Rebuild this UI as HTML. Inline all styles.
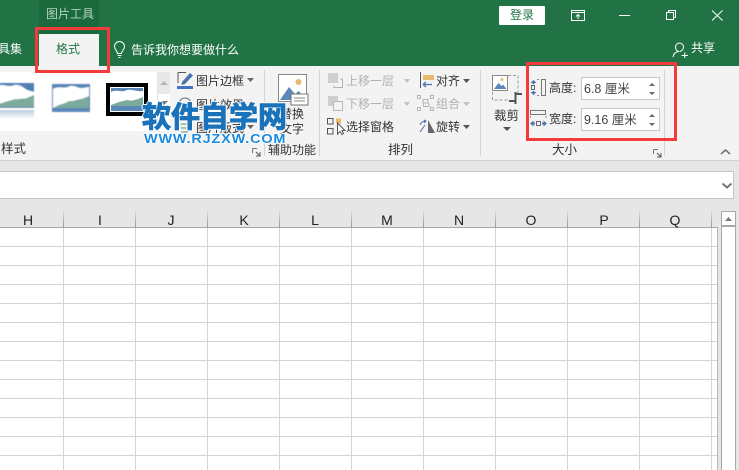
<!DOCTYPE html>
<html lang="zh"><head><meta charset="utf-8"><style>
html,body{margin:0;padding:0}
body{width:739px;height:470px;overflow:hidden;position:relative;background:#e6e6e6;font-family:"Liberation Sans","Noto Sans CJK SC",sans-serif;font-size:12px;color:#333}
.a{position:absolute}
.t{position:absolute;white-space:nowrap;line-height:16px}
.g{color:#b1b1b1}
.h{position:absolute;top:211px;font:14px/18px "Liberation Sans",sans-serif;color:#222;width:20px;text-align:center}
.sep{position:absolute;background:#d4d4d4;width:1px}
svg{position:absolute;overflow:visible}
</style></head><body>
<!-- title -->
<div class="a" style="left:0;top:0;width:739px;height:66px;background:#217346"></div>
<div class="a" style="left:39px;top:0;width:60px;height:34px;background:#1b6a3d"></div>
<div class="t" style="left:46px;top:6px;color:#b5d3c1;font-size:12px">图片工具</div>
<div class="a" style="left:39px;top:34px;width:60px;height:32px;background:#f3f3f3"></div>
<div class="t" style="left:56px;top:41px;color:#217346">格式</div>
<div class="t" style="left:0;top:41px;color:#fff;width:22px;overflow:hidden;direction:rtl">工具集</div>
<svg style="left:113px;top:41px" width="14" height="18" fill="none" stroke="#fff" stroke-width="1"><path d="M4.5 12.5C4.5 9.5 1.5 9 1.5 5.5A5 5 0 0 1 11.5 5.5C11.5 9 8.500 9.500 8.500 12.500ZM4.500 14.500H8.500M5.500 16.500H7.500"/></svg>
<div class="t" style="left:131px;top:42px;color:#fff">告诉我你想要做什么</div>
<div class="a" style="left:499px;top:6px;width:46px;height:19px;background:#fff;border-radius:1px"></div>
<div class="t" style="left:510px;top:7px;color:#217346">登录</div>
<svg style="left:570px;top:9px" width="16" height="14" fill="none" stroke="#fff"><path d="M1.500 1.500H14.500V11.500H1.500ZM1.500 3.500H14.500M8 10V5.500M6 7.500L8 5.500L10 7.500"/></svg>
<svg style="left:618px;top:15px" width="12" height="2"><path d="M1 .500H12" stroke="#fff" fill="none"/></svg>
<svg style="left:665px;top:9px" width="12" height="12" fill="none" stroke="#fff"><path d="M1.500 3.500H8.500V10.500H1.500ZM3.500 3.500V1.500H10.500V8.500H8.500"/></svg>
<svg style="left:711px;top:10px" width="12" height="12" fill="none" stroke="#fff"><path d="M1 .500L11.500 10.500M11.500 .500L1 10.500"/></svg>
<svg style="left:671px;top:41px" width="18" height="17" fill="none" stroke="#fff"><path d="M2 16C2.500 12.500 4.500 11 7.500 10.500C5 9.500 4.500 8 4.500 6A4 4 0 0 1 12.500 6C12.500 8 11.500 9.500 9 10.500M10.500 14.500H17M13.750 11.500V17"/></svg>
<div class="t" style="left:691px;top:40px;color:#fff">共享</div>
<!-- ribbon -->
<div class="a" style="left:0;top:66px;width:739px;height:94px;background:#f3f3f3"></div>
<div class="a" style="left:0;top:160px;width:739px;height:1px;background:#d2d2d2"></div>
<div class="a" style="left:0;top:72px;width:157px;height:59px;background:#fff"></div>
<div class="a" style="left:157px;top:72px;width:13px;height:59px;background:#fff;border-left:1px solid #e3e3e3;box-sizing:border-box"></div>
<div class="a" style="left:158px;top:72px;width:12px;height:22px;background:#e8e8e8"></div>
<svg style="left:158px;top:79px" width="12" height="8"><path d="M2 6H10L6 2Z" fill="#b8b8b8"/></svg>
<svg style="left:158px;top:99px" width="12" height="8"><path d="M2 2H10L6 6Z" fill="#777"/></svg>
<!-- thumbnails -->
<svg style="left:0;top:83px" width="34" height="38"><defs><filter id="b"><feGaussianBlur stdDeviation=".5"/></filter><linearGradient id="f" x1="0" y1="0" x2="0" y2="1"><stop offset="0" stop-color="#b9cbe0"/><stop offset="1" stop-color="#fff"/></linearGradient></defs><g filter="url(#b)"><rect x="-4" y="0" width="38" height="25" fill="#5380b5"/><path d="M-4 3C4 0 8 5 14 2C20 1 24 5 27 7L34 9V15L20 16L8 19L-4 22Z" fill="#fff"/><path d="M-4 22L8 18L16 16L22 17L34 12V24H-4Z" fill="#7dab9b"/><rect x="-4" y="25" width="38" height="1.500" fill="#fff"/><rect x="-4" y="27" width="38" height="9" fill="url(#f)"/></g></svg>
<svg style="left:51px;top:83px" width="40" height="30"><g filter="url(#b)"><rect x="1" y="1" width="38" height="28" fill="#5b87b9"/><path d="M2 6C8 2 12 7 19 3C24 2 28 6 32 5L38 4V14L22 18L8 22L2 25Z" fill="#fff"/><path d="M2 25L10 22L18 18L26 18L38 13V25Z" fill="#7dab9b"/></g></svg>
<div class="a" style="left:106px;top:83px;width:42px;height:33px;background:#000"></div>
<div class="a" style="left:110px;top:87px;width:34px;height:25px;background:#fff"></div>
<svg style="left:111px;top:88px" width="32" height="23"><rect width="32" height="23" fill="#5b87b9"/><path d="M0 4C6 1 10 5 16 2C22 1 26 4 32 3V10L20 13L8 15L0 17Z" fill="#fff"/><path d="M0 17L8 14L16 12L22 13L32 9V18H0Z" fill="#7dab9b"/></svg>
<div class="t" style="left:0;top:141px;color:#333;width:26px;overflow:hidden;direction:rtl;font-size:12.500px">片样式</div>
<svg style="left:252px;top:148px" width="9" height="9" fill="none" stroke="#777"><path d="M.500 .500H5M.500 .500V5"/><path d="M4 4L8 8M8 4V8H4" stroke="#555"/></svg>
<!-- border etc -->
<svg style="left:177px;top:71px" width="17" height="18" fill="none"><path d="M1 1.500H9M1 1.500V12" stroke="#555"/><path d="M5 11L13 2L16 4.500L8 13L4.500 14Z" fill="#4b74ad"/><rect y="15" width="16" height="3" fill="#4472c4"/></svg>
<div class="t" style="left:196px;top:73px">图片边框</div>
<svg style="left:247px;top:78px" width="7" height="4"><path d="M0 0H7L3.500 4Z" fill="#666"/></svg>
<svg style="left:177px;top:97px" width="16" height="14" fill="none" stroke="#666"><circle cx="8" cy="7" r="6"/></svg>
<div class="t" style="left:196px;top:97px">图片效果</div>
<svg style="left:180px;top:122px" width="12" height="12" fill="none" stroke="#5b9a6f"><path d="M1 2H8M1 6H8M1 10H8"/></svg>
<div class="t" style="left:196px;top:120px">图片版式</div>
<svg style="left:247px;top:125px" width="7" height="4"><path d="M0 0H7L3.500 4Z" fill="#666"/></svg>
<div class="sep" style="left:264px;top:70px;height:86px"></div>
<!-- alt text -->
<svg style="left:278px;top:74px" width="31" height="33"><rect x=".500" y=".500" width="28" height="27" fill="#fff" stroke="#888"/><circle cx="20.500" cy="8" r="3" fill="#e8b96a"/><path d="M2 26L11 13L17 20L21 17L27 26Z" fill="#5b87b9"/><rect x="13" y="20" width="17" height="11" fill="#fff" stroke="#777"/><path d="M16 24H27M16 27H27" stroke="#888"/></svg>
<div class="t" style="left:280px;top:106px">替换</div>
<div class="t" style="left:280px;top:121px">文字</div>
<div class="t" style="left:268px;top:142px">辅助功能</div>
<div class="sep" style="left:319px;top:70px;height:86px"></div>
<!-- arrange -->
<svg style="left:328px;top:73px" width="16" height="16" fill="none"><rect width="10" height="10" fill="#cfcfcf"/><path d="M6 12.500V14.500H14.500V6H12" stroke="#b5b5b5"/></svg>
<div class="t g" style="left:346px;top:73px">上移一层</div>
<svg style="left:404px;top:79px" width="6" height="4"><path d="M0 0H6L3 4Z" fill="#c0c0c0"/></svg>
<svg style="left:328px;top:96px" width="16" height="16" fill="none"><rect width="10" height="10" fill="#cfcfcf"/><rect x="5.500" y="5.500" width="9" height="9" fill="#f3f3f3" stroke="#b5b5b5"/></svg>
<div class="t g" style="left:346px;top:96px">下移一层</div>
<svg style="left:404px;top:102px" width="6" height="4"><path d="M0 0H6L3 4Z" fill="#c0c0c0"/></svg>
<svg style="left:327px;top:118px" width="19" height="17" fill="none" stroke="#555"><path d="M.500 .500H6V6H.500ZM.500 10.500H6V16H.500Z"/><rect x="9" y=".500" width="5" height="5" fill="#e8b96a" stroke="none"/><path d="M10.500 5V16L13 13.500L15 16.500L16.500 15.500L15 12.500H18Z" fill="#fff"/></svg>
<div class="t" style="left:346px;top:119px">选择窗格</div>
<svg style="left:420px;top:72px" width="16" height="17" fill="none"><path d="M.500 0V16" stroke="#555"/><rect x="3" y="3" width="11" height="5" fill="#e8b96a"/><path d="M3 12.500H12M3 12.500L6 10M3 12.500L6 15" stroke="#4b74ad" stroke-width="1.300"/></svg>
<div class="t" style="left:436px;top:73px">对齐</div>
<svg style="left:463px;top:79px" width="7" height="4"><path d="M0 0H7L3.500 4Z" fill="#555"/></svg>
<svg style="left:417px;top:95px" width="17" height="16" fill="none" stroke="#b5b5b5"><path d="M.500 .500H3.500V3.500H.500ZM13.500 .500H16.500V3.500H13.500ZM.500 12.500H3.500V15.500H.500ZM13.500 12.500H16.500V15.500H13.500ZM6 4.500H11V8H6ZM6.500 8V11.500H12V8"/></svg>
<div class="t g" style="left:436px;top:96px">组合</div>
<svg style="left:463px;top:102px" width="7" height="4"><path d="M0 0H7L3.500 4Z" fill="#c0c0c0"/></svg>
<svg style="left:419px;top:119px" width="17" height="15" fill="none"><path d="M9 14V1L16 14Z" fill="#666"/><path d="M1 13L6 6M1 6C2 3 4 2 7 2M5 1L7 2L5 4" stroke="#4b74ad"/></svg>
<div class="t" style="left:436px;top:119px">旋转</div>
<svg style="left:463px;top:125px" width="7" height="4"><path d="M0 0H7L3.500 4Z" fill="#555"/></svg>
<div class="t" style="left:388px;top:142px;font-size:12.500px">排列</div>
<div class="sep" style="left:480px;top:70px;height:86px"></div>
<!-- crop -->
<svg style="left:491px;top:74px" width="32" height="32" fill="none"><rect x="1.500" y="1.500" width="15" height="15" fill="#fff" stroke="#888"/><path d="M3 15L7.500 9L10.500 12L12 10.500L15.500 15Z" fill="#5b87b9"/><circle cx="11" cy="5.500" r="1.500" fill="#e8b96a"/><path d="M17 1.500H27V19M1.500 18V26H18" stroke="#999" stroke-dasharray="3 2"/><path d="M18 27H24.500V20H31M24.500 20V18M24.500 27V30" stroke="#555" stroke-width="2"/></svg>
<div class="t" style="left:494px;top:108px;font-size:12.500px">裁剪</div>
<svg style="left:503px;top:127px" width="8" height="4"><path d="M0 0H8L4 4Z" fill="#555"/></svg>
<!-- size -->
<svg style="left:530px;top:79px" width="17" height="17" fill="none"><path d="M3.500 1L6.500 4H.500ZM3.500 16L6.500 13H.500Z" fill="#4b74ad"/><path d="M3.500 3V5M3.500 12V14" stroke="#4b74ad" stroke-width="2"/><rect x="1.500" y="6.500" width="3" height="4" stroke="#666"/><path d="M7 .500H9M7 16.500H9" stroke="#888"/><rect x="11.500" y=".500" width="4" height="16" stroke="#777"/></svg>
<div class="t" style="left:549px;top:80px">高度:</div>
<div class="a" style="left:581px;top:77px;width:79px;height:23px;background:#fff;border:1px solid #c6c6c6;box-sizing:border-box"></div>
<div class="t" style="left:584px;top:81px;color:#444;font-size:12.500px">6.8 厘米</div>
<svg style="left:648px;top:82px" width="8" height="15"><path d="M1 4H7L4 1ZM1 10H7L4 13Z" fill="#666"/></svg>
<svg style="left:530px;top:110px" width="17" height="17" fill="none"><rect x=".500" y=".500" width="15" height="4" stroke="#777"/><path d="M.500 6V8M16 6V8" stroke="#999"/><path d="M0 13.500L3.500 10.500V16.500ZM17 13.500L13.500 10.500V16.500Z" fill="#4b74ad"/><path d="M3 13.500H5M12 13.500H14" stroke="#4b74ad" stroke-width="2"/><rect x="6.500" y="11.500" width="4" height="4" stroke="#666"/></svg>
<div class="t" style="left:549px;top:111px">宽度:</div>
<div class="a" style="left:581px;top:108px;width:79px;height:23px;background:#fff;border:1px solid #c6c6c6;box-sizing:border-box"></div>
<div class="t" style="left:584px;top:112px;color:#444;font-size:12.500px">9.16 厘米</div>
<svg style="left:648px;top:113px" width="8" height="15"><path d="M1 4H7L4 1ZM1 10H7L4 13Z" fill="#666"/></svg>
<div class="t" style="left:552px;top:142px;font-size:12.500px">大小</div>
<svg style="left:653px;top:149px" width="9" height="9" fill="none" stroke="#777"><path d="M.500 .500H5M.500 .500V5"/><path d="M4 4L8 8M8 4V8H4" stroke="#555"/></svg>
<div class="sep" style="left:664px;top:70px;height:86px"></div>
<svg style="left:720px;top:148px" width="11" height="7" fill="none" stroke="#666" stroke-width="1.500"><path d="M1 6L5.500 2L10 6"/></svg>
<!-- formula -->
<div class="a" style="left:-2px;top:171px;width:736px;height:28px;background:#fff;border:1px solid #c6c6c6;box-sizing:border-box"></div>
<svg style="left:721px;top:182px" width="12" height="8" fill="none" stroke="#777" stroke-width="2"><path d="M1.500 1.500L6 5.500L10.500 1.500"/></svg>
<!-- grid -->
<div class="a" style="left:0;top:228px;width:717px;height:242px;background-color:#fff;background-image:linear-gradient(to right,#d4d4d4 1px,transparent 1px),linear-gradient(to bottom,#d4d4d4 1px,transparent 1px);background-size:72px 100%,100% 19px;background-position:-9px 0,0 18px"></div>
<div class="a" style="left:0;top:227px;width:717px;height:1px;background:#a5a5a5"></div>
<div class="a" style="left:717px;top:227px;width:1px;height:243px;background:#b5b5b5"></div>
<div class="a" style="left:63px;top:209px;width:1px;height:18px;background:linear-gradient(#e6e6e6,#999)"></div>
<div class="a" style="left:135px;top:209px;width:1px;height:18px;background:linear-gradient(#e6e6e6,#999)"></div>
<div class="a" style="left:207px;top:209px;width:1px;height:18px;background:linear-gradient(#e6e6e6,#999)"></div>
<div class="a" style="left:279px;top:209px;width:1px;height:18px;background:linear-gradient(#e6e6e6,#999)"></div>
<div class="a" style="left:351px;top:209px;width:1px;height:18px;background:linear-gradient(#e6e6e6,#999)"></div>
<div class="a" style="left:423px;top:209px;width:1px;height:18px;background:linear-gradient(#e6e6e6,#999)"></div>
<div class="a" style="left:495px;top:209px;width:1px;height:18px;background:linear-gradient(#e6e6e6,#999)"></div>
<div class="a" style="left:567px;top:209px;width:1px;height:18px;background:linear-gradient(#e6e6e6,#999)"></div>
<div class="a" style="left:639px;top:209px;width:1px;height:18px;background:linear-gradient(#e6e6e6,#999)"></div>
<div class="a" style="left:711px;top:209px;width:1px;height:18px;background:linear-gradient(#e6e6e6,#999)"></div>
<div class="h" style="left:18px">H</div><div class="h" style="left:90px">I</div><div class="h" style="left:161px">J</div><div class="h" style="left:234px">K</div><div class="h" style="left:305px">L</div><div class="h" style="left:377px">M</div><div class="h" style="left:449px">N</div><div class="h" style="left:521px">O</div><div class="h" style="left:594px">P</div><div class="h" style="left:665px">Q</div>
<!-- scrollbar -->
<div class="a" style="left:721px;top:211px;width:15px;height:259px;background:#fff;border-left:1px solid #a8a8a8;border-right:1px solid #a8a8a8;box-sizing:border-box"></div>
<div class="a" style="left:721px;top:211px;width:15px;height:15px;background:#fff;border:1px solid #a8a8a8;box-sizing:border-box"></div>
<div class="a" style="left:721px;top:226px;width:15px;height:1px;background:#a8a8a8"></div>
<svg style="left:724px;top:216px" width="9" height="5"><path d="M1 5H8L4.500 1Z" fill="#777"/></svg>
<!-- red boxes -->
<div class="a" style="left:35px;top:27px;width:75px;height:46px;border:3px solid #f43a3a;box-sizing:border-box"></div>
<div class="a" style="left:526px;top:62px;width:151px;height:79px;border:3px solid #f43a3a;box-sizing:border-box"></div>
<!-- watermark -->
<div class="t" style="left:142px;top:101px;line-height:34px;font-size:29px;font-weight:bold;color:#1a72ba;-webkit-text-stroke:1px #1a72ba;text-shadow:1.500px 0 #fff,-1.500px 0 #fff,0 1.500px #fff,0 -1.500px #fff,1px 1px #fff,-1px -1px #fff,1px -1px #fff,-1px 1px #fff">软件自学网</div>
<div class="t" style="left:144px;top:131px;font-size:13px;font-weight:bold;color:#1a8ae0;letter-spacing:.75px;transform:scaleX(1.11);transform-origin:0 50%;text-shadow:1px 0 #fff,-1px 0 #fff,0 1px #fff,0 -1px #fff">WWW.RJZXW.COM</div>
</body></html>
